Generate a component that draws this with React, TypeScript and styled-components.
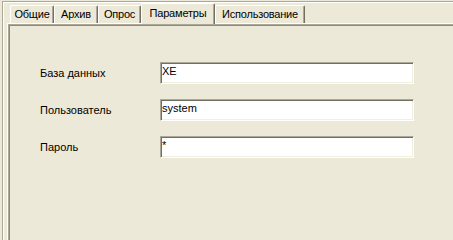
import { Fragment } from "react";
import styled, { createGlobalStyle } from "styled-components";

const GlobalStyle = createGlobalStyle`
  html, body {
    margin: 0;
    padding: 0;
    height: 100%;
    background: #ece9d8;
    font-family: "Liberation Sans", Arial, sans-serif;
    font-size: 11px;
    color: #000;
  }
  #root {
    height: 100%;
    overflow: hidden;
  }
`;

const Frame = styled.div`
  margin: 1px 0 0 2px;
  height: calc(100% - 1px);
  box-sizing: border-box;
  border-top: 1px solid #aca899;
  border-left: 1px solid #aca899;
  box-shadow: inset 1px 1px 0 #fff;
  padding: 1px 0 0 4px;
  display: flex;
  flex-direction: column;
`;

const TabRow = styled.div`
  display: flex;
  align-items: flex-end;
  height: 20px;
  padding-left: 3px;
`;

const Tab = styled.div<{ $w: number; $active?: boolean }>`
  position: relative;
  z-index: ${(p) => (p.$active ? 2 : 1)};
  box-sizing: border-box;
  width: ${(p) => p.$w}px;
  height: ${(p) => (p.$active ? 21 : 18)}px;
  margin-bottom: ${(p) => (p.$active ? -1 : 0)}px;
  padding-top: ${(p) => (p.$active ? 3 : 2)}px;
  text-align: center;
  line-height: 13px;
  letter-spacing: -0.2px;
  white-space: nowrap;
  background: #ece9d8;
  border-top: 1px solid #fff;
  border-left: 1px solid #fff;
  border-right: 1px solid #716f64;
  border-top-left-radius: 2px;
  border-top-right-radius: 2px;
  box-shadow: inset -1px 0 0 #aca899;
`;

const Panel = styled.div`
  flex: 1;
  border-top: 1px solid #fff;
  border-left: 1px solid #fff;
  display: flex;
`;

const Sunken = styled.div`
  flex: 1;
  border-top: 1px solid #aca899;
  border-left: 1px solid #aca899;
  box-shadow: inset 1px 1px 0 #8d8a7c;
  padding: 37px 0 0 31px;
`;

const Form = styled.div`
  display: grid;
  grid-template-columns: 120px 254px;
  row-gap: 15px;
  align-items: center;
`;

const Label = styled.label`
  line-height: 13px;
`;

const Field = styled.input`
  box-sizing: border-box;
  width: 254px;
  height: 22px;
  margin: 0;
  padding: 0 1px 5px 1px;
  font-family: "Liberation Sans", Arial, sans-serif;
  font-size: 11px;
  color: #000;
  background: #fff;
  outline: none;
  border-style: solid;
  border-width: 1px;
  border-color: #aca899 #fff #fff #aca899;
  box-shadow: inset 1px 1px 0 #716f64, inset -1px -1px 0 #f1efe2;
`;

const tabs = [
  { title: "Общие", w: 44 },
  { title: "Архив", w: 44 },
  { title: "Опрос", w: 43 },
  { title: "Параметры", w: 74, active: true },
  { title: "Использование", w: 90 },
];

const fields = [
  { label: "База данных", value: "XE" },
  { label: "Пользователь", value: "system" },
  { label: "Пароль", value: "*" },
];

export default function App() {
  return (
    <>
      <GlobalStyle />
      <Frame>
        <TabRow>
          {tabs.map((t) => (
            <Tab key={t.title} $w={t.w} $active={t.active}>
              {t.title}
            </Tab>
          ))}
        </TabRow>
        <Panel>
          <Sunken>
            <Form>
              {fields.map((f) => (
                <Fragment key={f.label}>
                  <Label>{f.label}</Label>
                  <Field readOnly defaultValue={f.value} />
                </Fragment>
              ))}
            </Form>
          </Sunken>
        </Panel>
      </Frame>
    </>
  );
}
